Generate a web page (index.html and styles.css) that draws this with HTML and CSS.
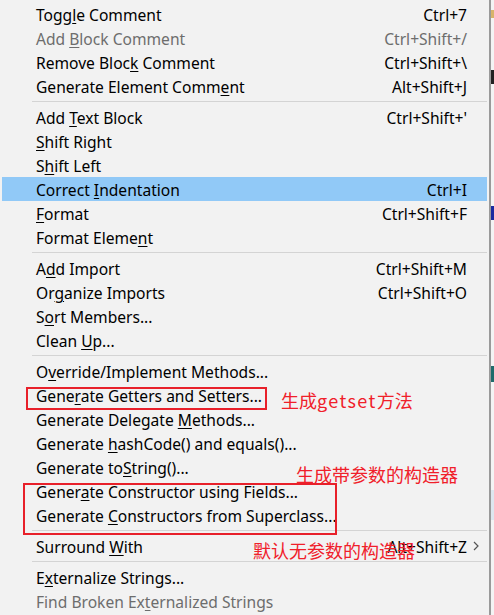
FILE: index.html
```html
<!DOCTYPE html>
<html>
<head>
<meta charset="utf-8">
<link rel="stylesheet" href="styles.css">
</head>
<body>
<div class="screen">
  <div class="menu">
    <div class="item"><span class="label">Togg<u>l</u>e Comment</span><span class="key">Ctrl+7</span></div>
    <div class="item disabled"><span class="label">Add <u>B</u>lock Comment</span><span class="key">Ctrl+Shift+/</span></div>
    <div class="item"><span class="label">Remove Bloc<u>k</u> Comment</span><span class="key">Ctrl+Shift+\</span></div>
    <div class="item"><span class="label">Generate Element Comm<u>e</u>nt</span><span class="key">Alt+Shift+J</span></div>
    <div class="sep"></div>
    <div class="item"><span class="label">Add <u>T</u>ext Block</span><span class="key">Ctrl+Shift+'</span></div>
    <div class="item"><span class="label"><u>S</u>hift Right</span></div>
    <div class="item"><span class="label">S<u>h</u>ift Left</span></div>
    <div class="item active"><span class="label">Correct <u>I</u>ndentation</span><span class="key">Ctrl+I</span></div>
    <div class="item"><span class="label"><u>F</u>ormat</span><span class="key">Ctrl+Shift+F</span></div>
    <div class="item"><span class="label">Format Eleme<u>n</u>t</span></div>
    <div class="sep"></div>
    <div class="item"><span class="label">A<u>d</u>d Import</span><span class="key">Ctrl+Shift+M</span></div>
    <div class="item"><span class="label">Or<u>g</u>anize Imports</span><span class="key">Ctrl+Shift+O</span></div>
    <div class="item"><span class="label">S<u>o</u>rt Members...</span></div>
    <div class="item"><span class="label">Clean <u>U</u>p...</span></div>
    <div class="sep"></div>
    <div class="item"><span class="label">O<u>v</u>erride/Implement Methods...</span></div>
    <div class="item"><span class="label">Gene<u>r</u>ate Getters and Setters...</span></div>
    <div class="item"><span class="label">Generate Delegate <u>M</u>ethods...</span></div>
    <div class="item"><span class="label">Generate <u>h</u>ashCode() and equals()...</span></div>
    <div class="item"><span class="label">Generate to<u>S</u>tring()...</span></div>
    <div class="item"><span class="label">Gener<u>a</u>te Constructor using Fields...</span></div>
    <div class="item"><span class="label">Generate <u>C</u>onstructors from Superclass...</span></div>
    <div class="sep"></div>
    <div class="item"><span class="label">Surround <u>W</u>ith</span><span class="key">Alt+Shift+Z</span><span class="arrow"><svg width="6" height="10" viewBox="0 0 6 10"><path d="M1 1 L5 5 L1 9" fill="none" stroke="#555" stroke-width="1.2"/></svg></span></div>
    <div class="sep"></div>
    <div class="item"><span class="label">E<u>x</u>ternalize Strings...</span></div>
    <div class="item disabled"><span class="label">Find Broken Ex<u>t</u>ernalized Strings</span></div>
  </div>
  <div class="behind">
    <span class="bit bit-a"></span>
    <span class="bit bit-b"></span>
    <span class="bit bit-c"></span>
    <span class="bit bit-d"></span>
    <span class="bit bit-e"></span>
  </div>
  <div class="box box-getset"></div>
  <div class="box box-ctor"></div>
  <div class="note note-getset">生成<span class="latin">getset</span>方法</div>
  <div class="note note-ctor">生成带参数的构造器</div>
  <div class="note note-default">默认无参数的构造器</div>
</div>
</body>
</html>
```
FILE: styles.css
```css
html, body {
  margin: 0;
  padding: 0;
  background: #ececec;
}
.screen {
  position: relative;
  width: 494px;
  height: 615px;
  overflow: hidden;
  display: flex;
}
.menu {
  width: 485px;
  padding: 2px 2px 4px 2px;
  background: #f2f2f2;
  border-right: 2px solid #9a9a9a;
  font-family: "Noto Sans", "Open Sans", sans-serif;
  font-size: 15.6px;
  color: #000;
  flex: none;
}
.behind {
  flex: 1;
  position: relative;
  background: #f4f4f4;
}
.bit { position: absolute; left: 0; width: 3px; }
.bit-a { top: 10px; height: 8px; background: #d8b36a; }
.bit-b { top: 70px; height: 14px; background: #222; }
.bit-c { top: 206px; height: 14px; background: #1a2aa0; }
.bit-d { top: 366px; height: 16px; background: #1f6b6b; }
.bit-e { top: 490px; height: 30px; background: #dde6ef; }
.item {
  height: 24px;
  display: flex;
  align-items: center;
  padding: 0 20px 0 34px;
  white-space: nowrap;
  position: relative;
}
.item .label { flex: 1; padding-top: 1px; }
.item .key { text-align: right; padding-top: 1px; }
.item u { text-decoration: underline; text-underline-offset: 2px; text-decoration-thickness: 1px; }
.item.disabled { color: #6d6d6d; }
.item.active { background: #91c9f7; }
.arrow {
  position: absolute;
  right: 8px;
  top: 7px;
  display: flex;
}
.sep {
  height: 7px;
  display: flex;
  align-items: center;
  padding-left: 30px;
}
.sep::after {
  content: "";
  display: block;
  height: 1px;
  flex: 1;
  background: #d4d4d4;
}
.box {
  position: absolute;
  border: 2px solid #e8202a;
}
.box-getset { left: 26px; top: 387px; width: 237px; height: 19px; }
.box-ctor { left: 23px; top: 483px; width: 310px; height: 48px; }
.note {
  position: absolute;
  color: #f0202a;
  font-family: "Noto Sans CJK SC", "Noto Sans", sans-serif;
  font-size: 18px;
  line-height: 24px;
  white-space: nowrap;
}
.note .latin { letter-spacing: 1.4px; }
.note-getset { left: 281px; top: 388px; }
.note-ctor { left: 296px; top: 462px; }
.note-default { left: 253px; top: 538px; }
```
